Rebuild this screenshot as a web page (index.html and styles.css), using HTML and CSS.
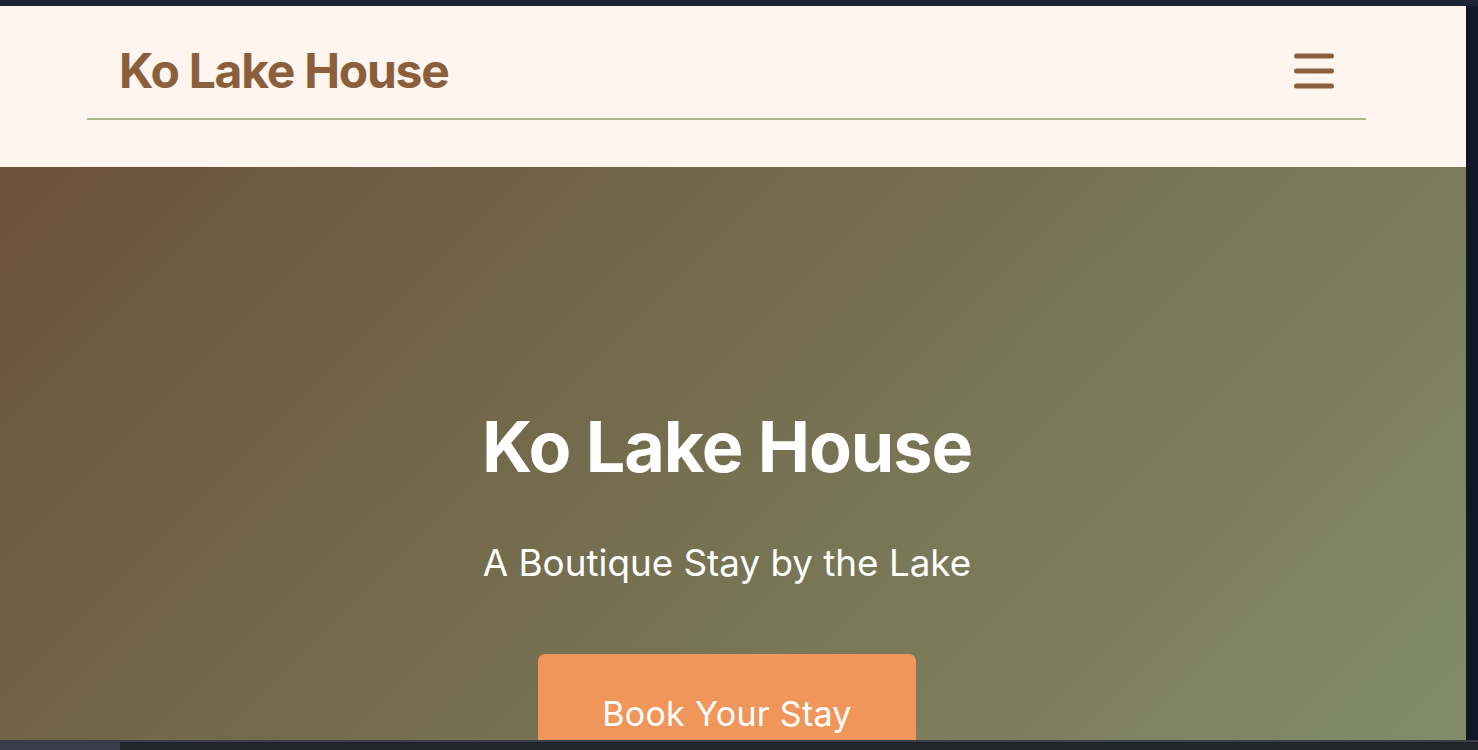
FILE: index.html
```html
<!DOCTYPE html>
<html lang="en">
<head>
<meta charset="utf-8">
<title>Ko Lake House</title>
<link rel="stylesheet" href="styles.css">
</head>
<body>
<div class="topbar"></div>
<div class="frame">
  <div class="page">
    <header class="site-header">
      <nav class="nav">
        <a class="brand" href="#">Ko Lake House</a>
        <button class="menu-btn" aria-label="Menu">
          <svg width="42" height="36" viewBox="0 0 42 36">
            <path d="M3.5 3h35M3.5 18h35M3.5 33h35" stroke="#8b5e3c" stroke-width="5" stroke-linecap="round" fill="none"/>
          </svg>
        </button>
      </nav>
    </header>
    <section class="hero">
      <div class="hero-inner">
        <h1 class="hero-title">Ko Lake House</h1>
        <p class="hero-sub">A Boutique Stay by the Lake</p>
        <a class="cta" href="#">Book Your Stay</a>
      </div>
    </section>
  </div>
  <div class="side-strip"></div>
</div>
<div class="bottombar"><div class="bottom-tab"></div></div>
</body>
</html>
```
FILE: styles.css
```css
* { box-sizing: border-box; }
html, body { margin: 0; padding: 0; }
body {
  background: #0f1729;
  font-family: Inter, "Noto Sans", "Liberation Sans", sans-serif;
  width: 1478px;
  height: 750px;
  overflow: hidden;
}
.topbar {
  height: 6px;
  background: #1e2433;
}
.frame {
  display: flex;
  height: 734px;
}
.page {
  width: 1466px;
  height: 734px;
  overflow: hidden;
  background: #fdf5ee;
}
.side-strip {
  width: 12px;
  background: #0f1729;
}
.bottombar {
  height: 10px;
  background: #22252c;
  border-top: 2px solid #3a3e46;
  display: flex;
}
.bottom-tab {
  width: 120px;
  background: #383c4a;
}
.site-header {
  background: #fdf5ee;
  height: 161px;
  padding-right: 12px;
}
.nav {
  margin: 0 88px 0 87px;
  height: 114px;
  border-bottom: 2px solid #a9ba8c;
  display: flex;
  align-items: center;
  justify-content: space-between;
  padding: 0 31px 0 32px;
}
.brand {
  font-size: 48px;
  font-weight: 700;
  letter-spacing: -1.25px;
  color: #8b5e3c;
  text-decoration: none;
  line-height: 1;
  padding-top: 18px;
}
.menu-btn {
  background: none;
  border: 0;
  padding: 0;
  margin-top: 18px;
  display: flex;
}
.hero {
  height: 573px;
  background: linear-gradient(135deg, #6b5239 0%, #757050 50%, #838c69 100%);
  padding-right: 12px;
}
.hero-inner {
  display: flex;
  flex-direction: column;
  align-items: center;
  padding-top: 238px;
  color: #ffffff;
  text-align: center;
}
.hero-title {
  margin: 0;
  font-size: 70px;
  line-height: 1.2;
  font-weight: 700;
  letter-spacing: -1.1px;
}
.hero-sub {
  margin: 46px 0 0;
  font-size: 36.8px;
  line-height: 1.5;
  font-weight: 400;
}
.cta {
  margin-top: 64px;
  background: #f0965a;
  color: #ffffff;
  text-decoration: none;
  font-size: 34px;
  line-height: 1.2;
  letter-spacing: 0.3px;
  padding: 40px 64px;
  border-radius: 7px;
}
```
